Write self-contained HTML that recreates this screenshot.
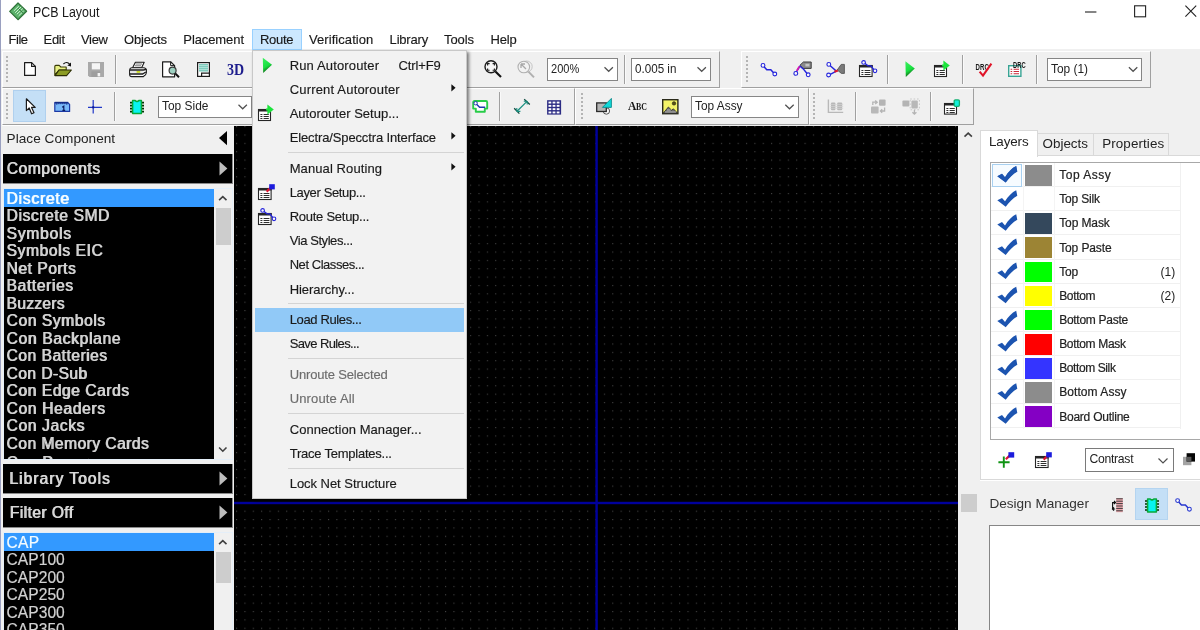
<!DOCTYPE html>
<html lang="en"><head><meta charset="utf-8"><title>PCB Layout</title>
<style>
html,body{margin:0;padding:0;background:#f0f0f0;}
body{width:1200px;height:630px;overflow:hidden;font-family:"Liberation Sans",sans-serif;}
#app{position:relative;width:1200px;height:630px;overflow:hidden;background:#f0f0f0;will-change:transform;}
#app div,#app span.t,#app svg{position:absolute;box-sizing:border-box;}
#app svg{overflow:visible;display:block;}
.t{white-space:pre;display:block;}
.combo{background:#fff;border:1px solid #868686;}
.sep{background:#a0a0a0;width:1px;}
.grip{background-image:radial-gradient(circle at 1px 1px,#b4b4b4 0.9px,transparent 1.2px);background-size:3px 4px;}

</style></head>
<body>
<div id="app">
<div style="left:0px;top:0px;width:1200px;height:49px;background:#fff;"></div>
<div style="left:0px;top:0px;width:1px;height:630px;background:#9aa0c0;"></div>
<svg style="left:9px;top:2px;" width="20" height="20" viewBox="0 0 20 20"><g transform="translate(0.2,0.3)"><path d="M0.5 9 L8.8 0.7 L17.4 9 L8.8 17.4 Z" fill="#58b068" stroke="#2e7238" stroke-width="1.2" stroke-linejoin="round"/><path d="M4.6 8.6 L9.6 3.8 M6 10.4 L12 4.6 M7.6 12 L13.6 6.2 M9.4 13.6 L14.4 8.8" stroke="#d4f4d8" stroke-width="1"/><path d="M9 6 L14 11" stroke="#2e7238" stroke-width="0.9"/></g></svg>
<span class="t" style="left:33px;top:4.2px;font-size:13.8px;line-height:18px;color:#1a1a1a;transform:scaleX(0.9016);transform-origin:0 0;">PCB Layout</span>
<svg style="left:1085px;top:11px;" width="12" height="2" viewBox="0 0 12 2"><path d="M0 1 H11.4" stroke="#222" stroke-width="1.1"/></svg>
<svg style="left:1134px;top:5px;" width="13" height="13" viewBox="0 0 13 13"><rect x="0.6" y="0.8" width="11" height="11" fill="none" stroke="#222" stroke-width="1.1"/></svg>
<svg style="left:1185px;top:5px;" width="12" height="12" viewBox="0 0 12 12"><path d="M0.4 0.6 L11.2 11.6 M11.2 0.6 L0.4 11.6" stroke="#222" stroke-width="1.1"/></svg>
<div style="left:252px;top:29px;width:50px;height:21px;background:#cce8ff;border:1px solid #99d1ff;"></div>
<span class="t" style="left:8.6px;top:30.5px;font-size:13px;line-height:18px;color:#1a1a1a;letter-spacing:-0.516px;-webkit-text-stroke:0.15px #1a1a1a;">File</span>
<span class="t" style="left:43.6px;top:30.5px;font-size:13px;line-height:18px;color:#1a1a1a;letter-spacing:-0.334px;-webkit-text-stroke:0.15px #1a1a1a;">Edit</span>
<span class="t" style="left:81px;top:30.5px;font-size:13px;line-height:18px;color:#1a1a1a;letter-spacing:-0.314px;-webkit-text-stroke:0.15px #1a1a1a;">View</span>
<span class="t" style="left:124px;top:30.5px;font-size:13px;line-height:18px;color:#1a1a1a;letter-spacing:-0.179px;-webkit-text-stroke:0.15px #1a1a1a;">Objects</span>
<span class="t" style="left:183.3px;top:30.5px;font-size:13px;line-height:18px;color:#1a1a1a;letter-spacing:-0.09px;-webkit-text-stroke:0.15px #1a1a1a;">Placement</span>
<span class="t" style="left:260px;top:30.5px;font-size:13px;line-height:18px;color:#1a1a1a;letter-spacing:-0.298px;-webkit-text-stroke:0.15px #1a1a1a;">Route</span>
<span class="t" style="left:309px;top:30.5px;font-size:13px;line-height:18px;color:#1a1a1a;letter-spacing:0.064px;-webkit-text-stroke:0.15px #1a1a1a;">Verification</span>
<span class="t" style="left:389.6px;top:30.5px;font-size:13px;line-height:18px;color:#1a1a1a;letter-spacing:-0.189px;-webkit-text-stroke:0.15px #1a1a1a;">Library</span>
<span class="t" style="left:444px;top:30.5px;font-size:13px;line-height:18px;color:#1a1a1a;letter-spacing:-0.087px;-webkit-text-stroke:0.15px #1a1a1a;">Tools</span>
<span class="t" style="left:490.6px;top:30.5px;font-size:13px;line-height:18px;color:#1a1a1a;letter-spacing:-0.179px;-webkit-text-stroke:0.15px #1a1a1a;">Help</span>
<div style="left:2px;top:51px;width:718px;height:37px;border-bottom:1px solid #a0a0a0;border-right:1px solid #a0a0a0;border-top:1px solid #fff;border-left:1px solid #fff;"></div>
<div class="grip" style="left:6px;top:56px;width:3px;height:28px;"></div>
<svg style="left:24px;top:62px;" width="12" height="14" viewBox="0 0 12 14"><path d="M0.6 0.6 H7.6 L11.4 4.4 V13.4 H0.6 Z" fill="#fff" stroke="#1c1c1c" stroke-width="1.2" stroke-linejoin="round"/><path d="M7.6 0.6 V4.4 H11.4" fill="none" stroke="#1c1c1c" stroke-width="1.1"/></svg>
<svg style="left:54px;top:61px;" width="18" height="16" viewBox="0 0 18 16"><g transform="translate(0,0.4)"><path d="M0.8 13.8 V5 Q0.8 4 1.8 4 H5.2 L6.8 5.6 H12.2 V8.6 H5 Z" fill="#e8f084" stroke="#3a3c08" stroke-width="1.1" stroke-linejoin="round"/><path d="M1 14.2 L5 8.6 H17.4 L12.6 14.2 Z" fill="#8c9c24" stroke="#2c2e04" stroke-width="1.1" stroke-linejoin="round"/><path d="M9.4 2.6 Q12.8 -0.6 15.8 3" fill="none" stroke="#111" stroke-width="1.1"/><path d="M17 1.2 V5 L13.4 4.2 Z" fill="#111"/></g></svg>
<svg style="left:88px;top:62px;" width="16" height="15" viewBox="0 0 16 15"><path d="M0 0 H16 V15 H1.5 L0 13.5 Z" fill="#a9a9a9"/><rect x="3.8" y="1.2" width="8.2" height="6.2" fill="#f6f6f6"/><rect x="3.4" y="9.4" width="9" height="5.6" fill="#9e9e9e"/><rect x="9.6" y="11" width="2.6" height="3.4" fill="#f4f4f4"/></svg>
<div style="left:115px;top:55px;width:1px;height:29px;background:#a0a0a0;box-shadow:1px 0 0 #fafafa;"></div>
<svg style="left:129px;top:61px;" width="18" height="17" viewBox="0 0 18 17"><g transform="translate(0,0.4)"><path d="M3.6 6.4 L6.4 0.8 H15.2 L12.6 6.4 Z" fill="#fff" stroke="#1c1c1c" stroke-width="1.1" stroke-linejoin="round"/><path d="M6.6 2.6 H13 M5.8 4.4 H12" stroke="#666" stroke-width="0.9"/><path d="M2.6 6.4 H14.4 Q17.4 6.6 17.4 9 V11.4 Q17.2 13.6 14.4 15.2 H2.8 Q0.6 15 0.6 13 V8.6 Q0.8 6.6 2.6 6.4 Z" fill="#fdfdfd" stroke="#1c1c1c" stroke-width="1.1"/><path d="M1 8.6 H14.4 Q16.6 8.4 17.2 7.6" fill="none" stroke="#1c1c1c" stroke-width="1.6"/><path d="M1 12.6 H13.6 L16.8 10.6" fill="none" stroke="#1c1c1c" stroke-width="1.3"/><rect x="1.4" y="9.6" width="12.4" height="1.8" fill="#e4e4e4"/><rect x="7.6" y="9.6" width="3.6" height="1.8" fill="#c8d820"/></g></svg>
<svg style="left:162px;top:61px;" width="18" height="17" viewBox="0 0 18 17"><path d="M0.6 0.8 H8.6 L12.6 4.6 V15.8 H0.6 Z" fill="#fff" stroke="#1c1c1c" stroke-width="1.2" stroke-linejoin="round"/><path d="M8.6 0.8 V4.6 H12.6" fill="none" stroke="#1c1c1c" stroke-width="1"/><circle cx="10.6" cy="9.6" r="3.5" fill="#9cd0c0" stroke="#3a3a3a" stroke-width="1.2"/><path d="M13.2 12.4 L17 16.2" stroke="#111" stroke-width="2"/></svg>
<svg style="left:197px;top:62px;" width="13" height="15" viewBox="0 0 13 15"><rect x="0.6" y="0.6" width="11.8" height="13.8" fill="#fff" stroke="#1c1c1c" stroke-width="1.2"/><rect x="2" y="2" width="9" height="7.8" fill="#c4ece4"/><path d="M2 2.8 H11 M2 4.8 H11 M2 6.8 H11 M2 8.8 H11" stroke="#68c0b0" stroke-width="1.1"/><path d="M4.6 14.4 V11.2 H12.4" fill="none" stroke="#1c1c1c" stroke-width="1.2"/></svg>
<span class="t" style="left:227.4px;top:60.7px;font-size:16.5px;line-height:18px;color:#1c1c8c;font-weight:700;font-family:&quot;Liberation Serif&quot;,serif;transform:scaleX(0.85);transform-origin:0 0;">3D</span>
<svg style="left:484px;top:60px;" width="18" height="18" viewBox="0 0 18 18"><circle cx="7" cy="6.8" r="6" fill="#f6f6f6" stroke="#1c1c1c" stroke-width="1.4"/><path d="M3.6 5.4 V3.6 H5.6 M8.6 3.6 H10.4 V5.4 M10.4 8.4 V10.2 H8.6 M5.6 10.2 H3.6 V8.4" fill="none" stroke="#1c1c1c" stroke-width="1.1"/><path d="M11.4 11.4 L17 17" stroke="#111" stroke-width="2.1"/></svg>
<svg style="left:517px;top:60px;" width="18" height="18" viewBox="0 0 18 18"><circle cx="9.6" cy="6.6" r="5.6" fill="none" stroke="#c4c4c4" stroke-width="1"/><circle cx="6.8" cy="7" r="5.8" fill="#f2f2f2" stroke="#b0b0b0" stroke-width="1.1"/><path d="M4 4 L9 9 M4 4 V8 M4 4 H8" stroke="#a8a8a8" stroke-width="1.3" fill="none"/><path d="M11.4 11.6 L17 17.4" stroke="#b0b0b0" stroke-width="2"/></svg>
<div class="combo" style="left:547px;top:57.6px;width:71px;height:23px;"></div><span class="t" style="left:551px;top:58.5px;font-size:13.5px;line-height:19px;color:#222;transform:scaleX(0.8167);transform-origin:0 0;">200%</span><svg style="left:604px;top:66px;" width="10" height="7" viewBox="0 0 10 7"><g transform="translate(0,0.7)"><path d="M0.5 0.5 L4.7 4.6 L8.9 0.5" fill="none" stroke="#505050" stroke-width="1.2"/></g></svg>
<div style="left:624px;top:55px;width:1px;height:29px;background:#a0a0a0;box-shadow:1px 0 0 #fafafa;"></div>
<div class="combo" style="left:631px;top:57.6px;width:80px;height:23px;"></div><span class="t" style="left:635px;top:58.5px;font-size:13.5px;line-height:19px;color:#222;transform:scaleX(0.8618);transform-origin:0 0;">0.005 in</span><svg style="left:697px;top:66px;" width="10" height="7" viewBox="0 0 10 7"><g transform="translate(0,0.7)"><path d="M0.5 0.5 L4.7 4.6 L8.9 0.5" fill="none" stroke="#505050" stroke-width="1.2"/></g></svg>
<div style="left:741px;top:51px;width:410px;height:37px;border-bottom:1px solid #a0a0a0;border-right:1px solid #a0a0a0;border-top:1px solid #fff;border-left:1px solid #fff;"></div>
<div class="grip" style="left:746px;top:56px;width:3px;height:28px;"></div>
<svg style="left:760px;top:62px;" width="18" height="15" viewBox="0 0 18 15"><g transform="translate(0.4,0.8)"><path d="M3.4 3.6 L6.4 7 H10.4 L13.6 10.4" fill="none" stroke="#2424dc" stroke-width="1.5"/><circle cx="2.6" cy="2.6" r="1.9" fill="#fbfbfb" stroke="#2424dc" stroke-width="1.1"/><circle cx="14.4" cy="11.2" r="1.9" fill="#fbfbfb" stroke="#2424dc" stroke-width="1.1"/></g></svg>
<svg style="left:793px;top:61px;" width="19" height="17" viewBox="0 0 19 17"><g transform="translate(0,0.2)"><path d="M7 4 L10.4 0.8 H18.2 V7.2 H10 L7 4 Z" fill="#8a8a8a" stroke="#3c3c3c" stroke-width="1"/><rect x="12.4" y="2.6" width="4" height="2.6" fill="#c4c4c4"/><path d="M3.2 11 L7 5 L10.6 8 L14.6 13" fill="none" stroke="#2424dc" stroke-width="1.4"/><path d="M3.8 9.6 L6.4 5.2" stroke="#d818b0" stroke-width="1.8"/><circle cx="2.8" cy="12.2" r="1.9" fill="#fbfbfb" stroke="#2424dc" stroke-width="1.1"/><circle cx="15.2" cy="13.6" r="1.9" fill="#fbfbfb" stroke="#2424dc" stroke-width="1.1"/></g></svg>
<svg style="left:825px;top:62px;" width="20" height="15" viewBox="0 0 20 15"><g transform="translate(0.8,0)"><path d="M11.4 8 L15.4 2.4 H18.6 V11.4 H15.6 Z" fill="#7a7a7a" stroke="#4a4a4a" stroke-width="0.8"/><path d="M3.6 3 L10.6 9.2 L4 12.6" fill="none" stroke="#2424dc" stroke-width="1.4"/><path d="M8.6 9.8 L12 8.4" stroke="#e01428" stroke-width="2.2"/><circle cx="3" cy="2.4" r="1.9" fill="#fbfbfb" stroke="#2424dc" stroke-width="1.1"/><circle cx="2.8" cy="13" r="1.9" fill="#fbfbfb" stroke="#2424dc" stroke-width="1.1"/></g></svg>
<svg style="left:859px;top:60px;" width="19" height="18" viewBox="0 0 19 18"><g transform="translate(0,0.4)"><g transform="translate(0,4.6)"><rect x="0.5" y="0.5" width="12.6" height="11" fill="#fff" stroke="#262626" stroke-width="1.1"/><rect x="0" y="0" width="13.6" height="2.5" fill="#262626"/><path d="M2.4 5.5 H4.4 M5.6 5.5 H11.4" stroke="#2e2e2e" stroke-width="1"/><path d="M2.4 7.5 H4.4 M5.6 7.5 H11.4" stroke="#2e2e2e" stroke-width="1"/><path d="M2.4 9.5 H4.4 M5.6 9.5 H11.4" stroke="#2e2e2e" stroke-width="1"/></g><path d="M5.4 2.6 L9 5.4 H12 L15 9.6" fill="none" stroke="#2424dc" stroke-width="1.3"/><circle cx="4.6" cy="2" r="1.8" fill="#fbfbfb" stroke="#2424dc" stroke-width="1.1"/><circle cx="16" cy="10.4" r="1.8" fill="#fbfbfb" stroke="#2424dc" stroke-width="1.1"/></g></svg>
<div style="left:887px;top:55px;width:1px;height:29px;background:#a0a0a0;box-shadow:1px 0 0 #fafafa;"></div>
<svg style="left:905px;top:61px;" width="10" height="16" viewBox="0 0 10 16"><g transform="translate(0.2,0)"><defs><linearGradient id="pg1" x1="0" y1="0" x2="0.35" y2="1"><stop offset="0" stop-color="#3cf060"/><stop offset="0.62" stop-color="#18e040"/><stop offset="0.8" stop-color="#149c28"/><stop offset="1" stop-color="#0c5c14"/></linearGradient></defs><path d="M0.2 0.2 L9.6 7.4 L0.6 16 Z" fill="url(#pg1)"/></g></svg>
<svg style="left:934px;top:60px;" width="16" height="18" viewBox="0 0 16 18"><g transform="translate(0,0.4)"><g transform="translate(0,4.6)"><rect x="0.5" y="0.5" width="12" height="11" fill="#fff" stroke="#262626" stroke-width="1.1"/><rect x="0" y="0" width="13" height="2.5" fill="#262626"/><path d="M2.4 5.5 H4.4 M5.6 5.5 H10.8" stroke="#2e2e2e" stroke-width="1"/><path d="M2.4 7.5 H4.4 M5.6 7.5 H10.8" stroke="#2e2e2e" stroke-width="1"/><path d="M2.4 9.5 H4.4 M5.6 9.5 H10.8" stroke="#2e2e2e" stroke-width="1"/></g><path d="M9.4 0 L15.8 5 L9.4 10 Z" fill="#1ce43c"/><path d="M8 5 H10" stroke="#1ce43c" stroke-width="2"/></g></svg>
<div style="left:962px;top:55px;width:1px;height:29px;background:#a0a0a0;box-shadow:1px 0 0 #fafafa;"></div>
<svg style="left:975px;top:63px;" width="18" height="14" viewBox="0 0 18 14"><g transform="translate(0.4,0)"><text x="0.2" y="6.8" font-family="Liberation Sans,sans-serif" font-size="8.4" font-weight="700" fill="#181818" textLength="13.2" lengthAdjust="spacingAndGlyphs">DRC</text><path d="M4.2 8.6 L7.6 12.6 L16 0.6" fill="none" stroke="#e01428" stroke-width="2.1"/></g></svg>
<svg style="left:1008px;top:62px;" width="18" height="16" viewBox="0 0 18 16"><g transform="translate(0,0.2)"><rect x="0.7" y="3.5" width="12.2" height="10.6" fill="#fff" stroke="#38a494" stroke-width="1.4"/><path d="M2.6 7 H4.2 M5.6 7 H11 M2.6 9.3 H4.2 M5.6 9.3 H11 M2.6 11.6 H4.2 M5.6 11.6 H11" stroke="#cc2838" stroke-width="1.1"/><text x="5" y="6" font-family="Liberation Sans,sans-serif" font-size="8.4" font-weight="700" fill="#181818" textLength="12.6" lengthAdjust="spacingAndGlyphs">DRC</text></g></svg>
<div style="left:1036px;top:55px;width:1px;height:29px;background:#a0a0a0;box-shadow:1px 0 0 #fafafa;"></div>
<div class="combo" style="left:1047px;top:57.6px;width:95.4px;height:23px;"></div><span class="t" style="left:1051px;top:58.5px;font-size:13.5px;line-height:19px;color:#222;transform:scaleX(0.8806);transform-origin:0 0;">Top (1)</span><svg style="left:1128px;top:66px;" width="10" height="7" viewBox="0 0 10 7"><g transform="translate(0.4,0.7)"><path d="M0.5 0.5 L4.7 4.6 L8.9 0.5" fill="none" stroke="#505050" stroke-width="1.2"/></g></svg>
<div style="left:2px;top:88px;width:573px;height:37px;border-bottom:1px solid #a0a0a0;border-right:1px solid #a0a0a0;border-top:1px solid #fff;border-left:1px solid #fff;"></div>
<div class="grip" style="left:6px;top:93px;width:3px;height:28px;"></div>
<div style="left:13px;top:90px;width:33px;height:32px;background:#c4dff6;border:1px solid #b0d0ee;"></div>
<svg style="left:25px;top:98px;" width="12" height="17" viewBox="0 0 12 17"><g transform="translate(0.6,0)"><path d="M0.8 0.8 V12.6 L3.6 10 L6 15.8 L8.4 14.8 L6 9.4 H9.6 Z" fill="#fff" stroke="#1c1c1c" stroke-width="1.2" stroke-linejoin="round"/></g></svg>
<svg style="left:54px;top:101px;" width="17" height="11" viewBox="0 0 17 11"><g transform="translate(0.2,0)"><path d="M0.6 1.6 H13.6 L15.4 3.4 V10.4 H0.6 Z" fill="#78b8f8" stroke="#1c38a4" stroke-width="1.2" stroke-linejoin="round"/><path d="M0.6 1.6 H14" stroke="#142c88" stroke-width="1.6"/><path d="M2.6 1 V3.8 M4.6 1 V3.2 M6.6 1 V3.2 M8.6 1 V3.2 M10.6 1 V3.2 M12.6 1 V3.8" stroke="#142c88" stroke-width="0.9"/><path d="M8 6.2 L9.6 5.2 V9.4 M8.2 9.4 H11" stroke="#0c1c60" stroke-width="1.2" fill="none"/></g></svg>
<svg style="left:88px;top:100px;" width="14" height="14" viewBox="0 0 14 14"><path d="M5.2 0 V13.6 M0 7.3 H14" stroke="#2038c8" stroke-width="1.2"/><rect x="4.2" y="6.3" width="2" height="2" fill="#101c90"/></svg>
<div style="left:114px;top:92px;width:1px;height:29px;background:#a0a0a0;box-shadow:1px 0 0 #fafafa;"></div>
<svg style="left:130px;top:99px;" width="14" height="16" viewBox="0 0 14 16"><g transform="translate(0,0.6)"><path d="M0 3 H3 M0 6 H3 M0 9 H3 M0 12 H3 M11 3 H14 M11 6 H14 M11 9 H14 M11 12 H14" stroke="#003000" stroke-width="1.7"/><path d="M2.6 1 H5.2 Q7 2.8 8.8 1 H11.4 V14 H2.6 Z" fill="#08f4f0" stroke="#08a838" stroke-width="1.5" stroke-linejoin="round"/></g></svg>
<div class="combo" style="left:158px;top:95.6px;width:94px;height:22px;"></div><span class="t" style="left:162px;top:97.19999999999999px;font-size:13.5px;line-height:18px;color:#222;transform:scaleX(0.8832);transform-origin:0 0;">Top Side</span><svg style="left:238px;top:104px;" width="10" height="6" viewBox="0 0 10 6"><g transform="translate(0,0.2)"><path d="M0.5 0.5 L4.7 4.6 L8.9 0.5" fill="none" stroke="#505050" stroke-width="1.2"/></g></svg>
<svg style="left:472px;top:100px;" width="17" height="13" viewBox="0 0 17 13"><g transform="translate(0.2,0)"><path d="M2.4 1 H13.8 Q15 1 15 2.4 V8.6 H12.6 V11.8 H3.6 V8.6 H1 V2.4 Q1 1 2.4 1 Z" fill="#fff" stroke="#28cc48" stroke-width="1.9" stroke-linejoin="round"/><path d="M3.6 3.4 L7.4 7.2 H13" fill="none" stroke="#2038b0" stroke-width="1.4"/><circle cx="3.4" cy="3.2" r="1.7" fill="#fff" stroke="#2038b0" stroke-width="1"/></g></svg>
<div style="left:499px;top:92px;width:1px;height:29px;background:#a0a0a0;box-shadow:1px 0 0 #fafafa;"></div>
<svg style="left:513px;top:98px;" width="18" height="17" viewBox="0 0 18 17"><g transform="translate(0.6,0.6)"><path d="M3.4 12.6 L13.4 2.8" stroke="#189080" stroke-width="1.2"/><path d="M0.6 9.6 L5.8 15 M10.6 0.6 L16.2 5.8" stroke="#104c40" stroke-width="1.3"/><path d="M3.2 12.8 V9.4 M3.2 12.8 H6.8 M13.6 2.6 V6 M13.6 2.6 H10.2" stroke="#189080" stroke-width="1.1"/></g></svg>
<svg style="left:547px;top:100px;" width="15" height="16" viewBox="0 0 15 16"><g transform="translate(0.1,0.2)"><rect x="0" y="0" width="14" height="14.4" fill="#2c2c84"/><rect x="1.4" y="1.4" width="2.8" height="1.9" fill="#fff"/><rect x="5.5" y="1.4" width="2.8" height="1.9" fill="#fff"/><rect x="9.6" y="1.4" width="2.8" height="1.9" fill="#fff"/><rect x="1.4" y="4.7" width="2.8" height="1.9" fill="#fff"/><rect x="5.5" y="4.7" width="2.8" height="1.9" fill="#fff"/><rect x="9.6" y="4.7" width="2.8" height="1.9" fill="#fff"/><rect x="1.4" y="8.0" width="2.8" height="1.9" fill="#fff"/><rect x="5.5" y="8.0" width="2.8" height="1.9" fill="#fff"/><rect x="9.6" y="8.0" width="2.8" height="1.9" fill="#fff"/><rect x="1.4" y="11.3" width="2.8" height="1.9" fill="#fff"/><rect x="5.5" y="11.3" width="2.8" height="1.9" fill="#fff"/><rect x="9.6" y="11.3" width="2.8" height="1.9" fill="#fff"/></g></svg>
<div style="left:575px;top:88px;width:234px;height:37px;border-bottom:1px solid #a0a0a0;border-right:1px solid #a0a0a0;border-top:1px solid #fff;border-left:1px solid #fff;"></div>
<div class="grip" style="left:581px;top:93px;width:3px;height:28px;"></div>
<svg style="left:596px;top:98px;" width="16" height="17" viewBox="0 0 16 17"><circle cx="10.4" cy="13" r="3.2" fill="#f8f8f8" stroke="#555" stroke-width="1"/><rect x="0.7" y="4.9" width="9.6" height="8.6" fill="#b4b4b4" stroke="#2a2a2a" stroke-width="1.3"/><path d="M6.4 9.4 L15.4 0.4 V9.4 Z" fill="#10d8d8" stroke="#0c8c8c" stroke-width="0.9"/></svg>
<span class="t" style="left:628px;top:99px;font-size:13.4px;line-height:14px;color:#181818;font-weight:700;font-family:&quot;Liberation Serif&quot;,serif;transform:scaleX(0.86);transform-origin:0 0;">A</span>
<span class="t" style="left:636px;top:101.8px;font-size:9.4px;line-height:11px;color:#181818;font-weight:700;font-family:&quot;Liberation Serif&quot;,serif;transform:scaleX(0.84);transform-origin:0 0;">BC</span>
<svg style="left:662px;top:99px;" width="17" height="16" viewBox="0 0 17 16"><rect x="0.7" y="0.7" width="15.2" height="14" fill="#f4f468" stroke="#2a2a1a" stroke-width="1.4"/><circle cx="12" cy="4.4" r="1.7" fill="#5c5410" stroke="#2a2a1a" stroke-width="0.7"/><path d="M1.2 14.2 L6.4 8 L9.6 11.2 L11.4 9.8 L15.6 14.2 Z" fill="#6c6c6c" stroke="#2a2a2a" stroke-width="0.8"/><path d="M3 13 H14 M5 11 H8.6" stroke="#d8d8d8" stroke-width="0.7"/></svg>
<div class="combo" style="left:691px;top:95.6px;width:107.8px;height:22px;"></div><span class="t" style="left:695px;top:97.19999999999999px;font-size:13.5px;line-height:18px;color:#222;transform:scaleX(0.8792);transform-origin:0 0;">Top Assy</span><svg style="left:784px;top:104px;" width="11" height="6" viewBox="0 0 11 6"><g transform="translate(0.8,0.2)"><path d="M0.5 0.5 L4.7 4.6 L8.9 0.5" fill="none" stroke="#505050" stroke-width="1.2"/></g></svg>
<div style="left:809px;top:88px;width:165px;height:37px;border-bottom:1px solid #a0a0a0;border-right:1px solid #a0a0a0;border-top:1px solid #fff;border-left:1px solid #fff;"></div>
<div class="grip" style="left:813px;top:93px;width:3px;height:28px;"></div>
<svg style="left:827px;top:99px;" width="17" height="15" viewBox="0 0 17 15"><g transform="translate(0.6,0.6)"><path d="M0.8 0 V12.8 H15.6" fill="none" stroke="#b8b8b8" stroke-width="1.4"/><rect x="3.4" y="3" width="4.4" height="7.6" rx="1" fill="#b8b8b8"/><rect x="9.6" y="3" width="5" height="7.6" rx="1" fill="#b8b8b8"/><path d="M2.6 5 H15.6 M2.6 6.9 H15.6 M2.6 8.8 H15.6" stroke="#d4d4d4" stroke-width="0.7"/></g></svg>
<div style="left:855px;top:92px;width:1px;height:29px;background:#a0a0a0;box-shadow:1px 0 0 #fafafa;"></div>
<svg style="left:870px;top:99px;" width="17" height="15" viewBox="0 0 17 15"><g transform="translate(0.4,0)"><rect x="8.6" y="0.4" width="6.6" height="6.4" rx="1" fill="#b4b4b4"/><rect x="0.6" y="7.6" width="7.6" height="7" rx="1" fill="#b8b8b8"/><path d="M2.4 6 V3.2 H6.4 M4.8 1.4 L6.8 3.2 L4.8 5" fill="none" stroke="#b4b4b4" stroke-width="1.3"/><path d="M14.2 8.4 V12 H10 M11.8 10.2 L10 12 L11.8 13.8" fill="none" stroke="#b4b4b4" stroke-width="1.3"/></g></svg>
<svg style="left:902px;top:98px;" width="18" height="18" viewBox="0 0 18 18"><g transform="translate(0,0.2)"><rect x="0.4" y="2.4" width="7" height="6" rx="1" fill="#b4b4b4"/><rect x="9.4" y="2.4" width="6.4" height="8" rx="1" fill="#b8b8b8"/><path d="M8.2 0.8 H17.4 V11.6 H8.2 Z" fill="none" stroke="#c8c8c8" stroke-width="1" stroke-dasharray="1.6 1.8"/><path d="M12.4 11.6 V16 M10.4 14 L12.4 16 L14.4 14" fill="none" stroke="#b4b4b4" stroke-width="1.3"/></g></svg>
<div style="left:930px;top:92px;width:1px;height:29px;background:#a0a0a0;box-shadow:1px 0 0 #fafafa;"></div>
<svg style="left:944px;top:99px;" width="16" height="17" viewBox="0 0 16 17"><g transform="translate(0,0.2)"><g transform="translate(0,3.8)"><rect x="0.5" y="0.5" width="12" height="10.6" fill="#fff" stroke="#262626" stroke-width="1.1"/><rect x="0" y="0" width="13" height="2.5" fill="#262626"/><path d="M2.4 5.5 H4.4 M5.6 5.5 H10.8" stroke="#2e2e2e" stroke-width="1"/><path d="M2.4 7.5 H4.4 M5.6 7.5 H10.8" stroke="#2e2e2e" stroke-width="1"/><path d="M2.4 9.5 H4.4 M5.6 9.5 H10.8" stroke="#2e2e2e" stroke-width="1"/></g><rect x="10.2" y="0.7" width="5.2" height="6.4" rx="1.2" fill="#10f0dc" stroke="#10b070" stroke-width="1.3"/></g></svg>
<div style="left:2px;top:125px;width:232px;height:505px;background:#f0f0f0;"></div>
<div style="left:2px;top:125px;width:232px;height:29px;background:#f0f0f0;border-top:1px solid #fff;"></div>
<span class="t" style="left:6.6px;top:129.6px;font-size:13.6px;line-height:18px;color:#222;letter-spacing:0.035px;">Place Component</span>
<svg style="left:218px;top:130px;" width="10" height="16" viewBox="0 0 10 16"><g transform="translate(0.6,0.8)"><path d="M8.4 0.2 V14.4 L0.4 7.3 Z" fill="#000"/></g></svg>
<div style="left:3px;top:154px;width:230px;height:30px;background:#000;border-right:1px solid #8a8a8a;border-bottom:1px solid #8a8a8a;"></div><span class="t" style="left:6.4px;top:159px;font-size:15.6px;line-height:19px;color:#d8d8d8;letter-spacing:0.55px;text-shadow:0.8px 0 0 #d8d8d8;-webkit-text-stroke:0.12px #d8d8d8;">Components</span><svg style="left:219px;top:161px;" width="9" height="15" viewBox="0 0 9 15"><path d="M0.5 0.4 V14.6 L8.4 7.5 Z" fill="#bdbdbd"/></svg>
<div style="left:3px;top:464px;width:230px;height:30px;background:#000;border-right:1px solid #8a8a8a;border-bottom:1px solid #8a8a8a;"></div><span class="t" style="left:9.1px;top:469px;font-size:15.6px;line-height:19px;color:#d8d8d8;letter-spacing:1.029px;text-shadow:0.8px 0 0 #d8d8d8;-webkit-text-stroke:0.12px #d8d8d8;">Library Tools</span><svg style="left:219px;top:471px;" width="9" height="15" viewBox="0 0 9 15"><path d="M0.5 0.4 V14.6 L8.4 7.5 Z" fill="#bdbdbd"/></svg>
<div style="left:3px;top:498px;width:230px;height:30px;background:#000;border-right:1px solid #8a8a8a;border-bottom:1px solid #8a8a8a;"></div><span class="t" style="left:9.5px;top:503px;font-size:15.6px;line-height:19px;color:#d8d8d8;letter-spacing:0.431px;text-shadow:0.8px 0 0 #d8d8d8;-webkit-text-stroke:0.12px #d8d8d8;">Filter Off</span><svg style="left:219px;top:505px;" width="9" height="15" viewBox="0 0 9 15"><path d="M0.5 0.4 V14.6 L8.4 7.5 Z" fill="#bdbdbd"/></svg>
<div style="left:3px;top:187.5px;width:230px;height:272.5px;background:#000;border:1px solid #e4eef8;"></div>
<div style="left:4px;top:188.7px;width:210px;height:18px;background:#3399ff;"></div>
<div style="left:3px;top:189px;width:211px;height:270px;overflow:hidden;"><span class="t" style="left:3.3px;top:0.6px;font-size:15.6px;line-height:18px;color:#f4fcff;letter-spacing:0.755px;text-shadow:0.8px 0 0 #f4fcff;-webkit-text-stroke:0.12px #f4fcff;">Discrete</span><span class="t" style="left:3.3px;top:18.13px;font-size:15.6px;line-height:18px;color:#d2d2d2;letter-spacing:0.599px;text-shadow:0.8px 0 0 #d2d2d2;-webkit-text-stroke:0.12px #d2d2d2;">Discrete SMD</span><span class="t" style="left:3.3px;top:35.66px;font-size:15.6px;line-height:18px;color:#d2d2d2;letter-spacing:0.78px;text-shadow:0.8px 0 0 #d2d2d2;-webkit-text-stroke:0.12px #d2d2d2;">Symbols</span><span class="t" style="left:3.3px;top:53.19px;font-size:15.6px;line-height:18px;color:#d2d2d2;letter-spacing:0.604px;text-shadow:0.8px 0 0 #d2d2d2;-webkit-text-stroke:0.12px #d2d2d2;">Symbols EIC</span><span class="t" style="left:3.3px;top:70.72px;font-size:15.6px;line-height:18px;color:#d2d2d2;letter-spacing:0.522px;text-shadow:0.8px 0 0 #d2d2d2;-webkit-text-stroke:0.12px #d2d2d2;">Net Ports</span><span class="t" style="left:3.3px;top:88.25px;font-size:15.6px;line-height:18px;color:#d2d2d2;letter-spacing:0.617px;text-shadow:0.8px 0 0 #d2d2d2;-webkit-text-stroke:0.12px #d2d2d2;">Batteries</span><span class="t" style="left:3.3px;top:105.78px;font-size:15.6px;line-height:18px;color:#d2d2d2;letter-spacing:0.258px;text-shadow:0.8px 0 0 #d2d2d2;-webkit-text-stroke:0.12px #d2d2d2;">Buzzers</span><span class="t" style="left:3.3px;top:123.31px;font-size:15.6px;line-height:18px;color:#d2d2d2;letter-spacing:0.573px;text-shadow:0.8px 0 0 #d2d2d2;-webkit-text-stroke:0.12px #d2d2d2;">Con Symbols</span><span class="t" style="left:3.3px;top:140.84px;font-size:15.6px;line-height:18px;color:#d2d2d2;letter-spacing:0.675px;text-shadow:0.8px 0 0 #d2d2d2;-webkit-text-stroke:0.12px #d2d2d2;">Con Backplane</span><span class="t" style="left:3.3px;top:158.37px;font-size:15.6px;line-height:18px;color:#d2d2d2;letter-spacing:0.499px;text-shadow:0.8px 0 0 #d2d2d2;-webkit-text-stroke:0.12px #d2d2d2;">Con Batteries</span><span class="t" style="left:3.3px;top:175.9px;font-size:15.6px;line-height:18px;color:#d2d2d2;letter-spacing:0.416px;text-shadow:0.8px 0 0 #d2d2d2;-webkit-text-stroke:0.12px #d2d2d2;">Con D-Sub</span><span class="t" style="left:3.3px;top:193.43px;font-size:15.6px;line-height:18px;color:#d2d2d2;letter-spacing:0.551px;text-shadow:0.8px 0 0 #d2d2d2;-webkit-text-stroke:0.12px #d2d2d2;">Con Edge Cards</span><span class="t" style="left:3.3px;top:210.96px;font-size:15.6px;line-height:18px;color:#d2d2d2;letter-spacing:0.658px;text-shadow:0.8px 0 0 #d2d2d2;-webkit-text-stroke:0.12px #d2d2d2;">Con Headers</span><span class="t" style="left:3.3px;top:228.49px;font-size:15.6px;line-height:18px;color:#d2d2d2;letter-spacing:0.634px;text-shadow:0.8px 0 0 #d2d2d2;-webkit-text-stroke:0.12px #d2d2d2;">Con Jacks</span><span class="t" style="left:3.3px;top:246.02px;font-size:15.6px;line-height:18px;color:#d2d2d2;letter-spacing:0.464px;text-shadow:0.8px 0 0 #d2d2d2;-webkit-text-stroke:0.12px #d2d2d2;">Con Memory Cards</span><span class="t" style="left:3.3px;top:264.75px;font-size:15.6px;line-height:18px;color:#d2d2d2;letter-spacing:0.716px;text-shadow:0.8px 0 0 #d2d2d2;-webkit-text-stroke:0.12px #d2d2d2;">Con Power</span></div>
<div style="left:214px;top:188.5px;width:18px;height:270.5px;background:#f0f0f0;"></div>
<svg style="left:218px;top:196px;" width="9" height="6" viewBox="0 0 9 6"><g transform="translate(0.6,0)"><path d="M0.5 4.2 L4.2 0.7 L7.9 4.2" fill="none" stroke="#404040" stroke-width="1.6"/></g></svg>
<div style="left:215.8px;top:208px;width:14.8px;height:37px;background:#cdcdcd;"></div>
<svg style="left:218px;top:447px;" width="9" height="6" viewBox="0 0 9 6"><g transform="translate(0.6,0)"><path d="M0.5 0.5 L4.2 4.2 L7.9 0.5" fill="none" stroke="#404040" stroke-width="1.6"/></g></svg>
<div style="left:3px;top:531.5px;width:230px;height:100px;background:#000;border:1px solid #e4eef8;"></div>
<div style="left:4px;top:532.7px;width:210px;height:18px;background:#3399ff;"></div>
<div style="left:3px;top:533px;width:211px;height:97px;overflow:hidden;"><span class="t" style="left:3.5px;top:0.6px;font-size:15.6px;line-height:18px;color:#f4fcff;letter-spacing:0.312px;-webkit-text-stroke:0.2px #f4fcff;">CAP</span><span class="t" style="left:3.5px;top:18.13px;font-size:15.6px;line-height:18px;color:#d2d2d2;letter-spacing:0.039px;-webkit-text-stroke:0.2px #d2d2d2;">CAP100</span><span class="t" style="left:3.5px;top:35.66px;font-size:15.6px;line-height:18px;color:#d2d2d2;letter-spacing:0.039px;-webkit-text-stroke:0.2px #d2d2d2;">CAP200</span><span class="t" style="left:3.5px;top:53.19px;font-size:15.6px;line-height:18px;color:#d2d2d2;letter-spacing:0.039px;-webkit-text-stroke:0.2px #d2d2d2;">CAP250</span><span class="t" style="left:3.5px;top:70.72px;font-size:15.6px;line-height:18px;color:#d2d2d2;letter-spacing:0.039px;-webkit-text-stroke:0.2px #d2d2d2;">CAP300</span><span class="t" style="left:3.5px;top:88.25px;font-size:15.6px;line-height:18px;color:#d2d2d2;letter-spacing:0.039px;-webkit-text-stroke:0.2px #d2d2d2;">CAP350</span></div>
<div style="left:214px;top:532.5px;width:18px;height:98px;background:#f0f0f0;"></div>
<svg style="left:218px;top:540px;" width="9" height="6" viewBox="0 0 9 6"><g transform="translate(0.6,0)"><path d="M0.5 4.2 L4.2 0.7 L7.9 4.2" fill="none" stroke="#404040" stroke-width="1.6"/></g></svg>
<div style="left:215.8px;top:552px;width:14.8px;height:30.5px;background:#cdcdcd;"></div>
<div style="left:234.4px;top:126px;width:723.9px;height:504px;background:#000;overflow:hidden;"><svg style="left:0;top:0" width="725" height="505" viewBox="0 0 725 505"><defs><pattern id="dots" x="361.50" y="376.30" width="8.36" height="8.36" patternUnits="userSpaceOnUse"><rect x="0" y="0" width="1.1" height="1.1" fill="#444"/></pattern></defs><rect width="725" height="505" fill="url(#dots)"/><rect x="361.40" y="0" width="2.4" height="505" fill="#00009c"/><rect x="0" y="375.80" width="725" height="2.4" fill="#00009c"/></svg></div>
<div style="left:959px;top:126px;width:19px;height:504px;background:#f0f0f0;"></div>
<svg style="left:964px;top:132px;" width="9" height="6" viewBox="0 0 9 6"><g transform="translate(0,0.4)"><path d="M0.5 4.2 L4.2 0.7 L7.9 4.2" fill="none" stroke="#404040" stroke-width="1.6"/></g></svg>
<div style="left:960.8px;top:493.7px;width:16.2px;height:18.5px;background:#cdcdcd;"></div>
<div style="left:978px;top:125px;width:222px;height:505px;background:#f0f0f0;"></div>
<div style="left:980px;top:155px;width:220px;height:325px;background:#fff;border-top:1px solid #d9d9d9;border-left:1px solid #d9d9d9;border-bottom:1px solid #d9d9d9;"></div>
<div style="left:1037px;top:132.5px;width:57px;height:23.5px;background:#f0f0f0;border:1px solid #d9d9d9;"></div>
<div style="left:1093px;top:132.5px;width:76px;height:23.5px;background:#f0f0f0;border:1px solid #d9d9d9;"></div>
<div style="left:980px;top:130px;width:58px;height:27px;background:#fff;border:1px solid #d9d9d9;border-bottom:none;"></div>
<span class="t" style="left:989px;top:133px;font-size:13.4px;line-height:18px;color:#222;letter-spacing:-0.124px;">Layers</span>
<span class="t" style="left:1042.6px;top:135px;font-size:13.4px;line-height:18px;color:#222;letter-spacing:-0.005px;">Objects</span>
<span class="t" style="left:1102.2px;top:135px;font-size:13.4px;line-height:18px;color:#222;letter-spacing:0.103px;">Properties</span>
<div style="left:990px;top:162px;width:212px;height:278px;background:#fff;border:1px solid #a8a8a8;"></div>
<div style="left:991px;top:186.13px;width:190px;height:1px;background:#f0f0f0;"></div>
<div style="left:1025px;top:165.0px;width:27.4px;height:20.6px;background:#8c8c8c;"></div>
<svg style="left:997px;top:165px;" width="21" height="18" viewBox="0 0 21 18"><path d="M0.3 11.2 L5 8.8 L8 12.2 C11 7 15 3 19.2 1 L20.3 6.6 C16 9 12 13 8.7 17.5 Z" fill="#1c54b0"/></svg>
<span class="t" style="left:1059.2px;top:167.2px;font-size:12px;line-height:17px;color:#222;letter-spacing:0.511px;-webkit-text-stroke:0.2px #222;">Top Assy</span>
<div style="left:991px;top:210.26px;width:190px;height:1px;background:#f0f0f0;"></div>
<div style="left:1025px;top:189.13px;width:27.4px;height:20.6px;background:#ffffff;"></div>
<svg style="left:997px;top:189px;" width="21" height="19" viewBox="0 0 21 19"><g transform="translate(0,0.13)"><path d="M0.3 11.2 L5 8.8 L8 12.2 C11 7 15 3 19.2 1 L20.3 6.6 C16 9 12 13 8.7 17.5 Z" fill="#1c54b0"/></g></svg>
<span class="t" style="left:1059.2px;top:191.33px;font-size:12px;line-height:17px;color:#222;letter-spacing:-0.174px;-webkit-text-stroke:0.2px #222;">Top Silk</span>
<div style="left:991px;top:234.39px;width:190px;height:1px;background:#f0f0f0;"></div>
<div style="left:1025px;top:213.26px;width:27.4px;height:20.6px;background:#34485c;"></div>
<svg style="left:997px;top:213px;" width="21" height="19" viewBox="0 0 21 19"><g transform="translate(0,0.26)"><path d="M0.3 11.2 L5 8.8 L8 12.2 C11 7 15 3 19.2 1 L20.3 6.6 C16 9 12 13 8.7 17.5 Z" fill="#1c54b0"/></g></svg>
<span class="t" style="left:1059.2px;top:215.46px;font-size:12px;line-height:17px;color:#222;letter-spacing:-0.107px;-webkit-text-stroke:0.2px #222;">Top Mask</span>
<div style="left:991px;top:258.52px;width:190px;height:1px;background:#f0f0f0;"></div>
<div style="left:1025px;top:237.39px;width:27.4px;height:20.6px;background:#9c8434;"></div>
<svg style="left:997px;top:237px;" width="21" height="19" viewBox="0 0 21 19"><g transform="translate(0,0.39)"><path d="M0.3 11.2 L5 8.8 L8 12.2 C11 7 15 3 19.2 1 L20.3 6.6 C16 9 12 13 8.7 17.5 Z" fill="#1c54b0"/></g></svg>
<span class="t" style="left:1059.2px;top:239.59px;font-size:12px;line-height:17px;color:#222;letter-spacing:-0.121px;-webkit-text-stroke:0.2px #222;">Top Paste</span>
<div style="left:991px;top:282.65px;width:190px;height:1px;background:#f0f0f0;"></div>
<div style="left:1025px;top:261.52px;width:27.4px;height:20.6px;background:#00ff00;"></div>
<svg style="left:997px;top:261px;" width="21" height="19" viewBox="0 0 21 19"><g transform="translate(0,0.52)"><path d="M0.3 11.2 L5 8.8 L8 12.2 C11 7 15 3 19.2 1 L20.3 6.6 C16 9 12 13 8.7 17.5 Z" fill="#1c54b0"/></g></svg>
<span class="t" style="left:1059.2px;top:263.72px;font-size:12px;line-height:17px;color:#222;letter-spacing:-0.174px;-webkit-text-stroke:0.2px #222;">Top</span>
<span class="t" style="left:1160.6px;top:263.72px;font-size:12px;line-height:17px;color:#222;letter-spacing:-0.033px;">(1)</span>
<div style="left:991px;top:306.78px;width:190px;height:1px;background:#f0f0f0;"></div>
<div style="left:1025px;top:285.65px;width:27.4px;height:20.6px;background:#ffff00;"></div>
<svg style="left:997px;top:285px;" width="21" height="19" viewBox="0 0 21 19"><g transform="translate(0,0.65)"><path d="M0.3 11.2 L5 8.8 L8 12.2 C11 7 15 3 19.2 1 L20.3 6.6 C16 9 12 13 8.7 17.5 Z" fill="#1c54b0"/></g></svg>
<span class="t" style="left:1059.2px;top:287.85px;font-size:12px;line-height:17px;color:#222;letter-spacing:-0.323px;-webkit-text-stroke:0.2px #222;">Bottom</span>
<span class="t" style="left:1160.6px;top:287.85px;font-size:12px;line-height:17px;color:#222;letter-spacing:-0.033px;">(2)</span>
<div style="left:991px;top:330.91px;width:190px;height:1px;background:#f0f0f0;"></div>
<div style="left:1025px;top:309.78px;width:27.4px;height:20.6px;background:#00ff00;"></div>
<svg style="left:997px;top:309px;" width="21" height="19" viewBox="0 0 21 19"><g transform="translate(0,0.78)"><path d="M0.3 11.2 L5 8.8 L8 12.2 C11 7 15 3 19.2 1 L20.3 6.6 C16 9 12 13 8.7 17.5 Z" fill="#1c54b0"/></g></svg>
<span class="t" style="left:1059.2px;top:311.98px;font-size:12px;line-height:17px;color:#222;letter-spacing:-0.276px;-webkit-text-stroke:0.2px #222;">Bottom Paste</span>
<div style="left:991px;top:355.04px;width:190px;height:1px;background:#f0f0f0;"></div>
<div style="left:1025px;top:333.91px;width:27.4px;height:20.6px;background:#ff0000;"></div>
<svg style="left:997px;top:333px;" width="21" height="19" viewBox="0 0 21 19"><g transform="translate(0,0.91)"><path d="M0.3 11.2 L5 8.8 L8 12.2 C11 7 15 3 19.2 1 L20.3 6.6 C16 9 12 13 8.7 17.5 Z" fill="#1c54b0"/></g></svg>
<span class="t" style="left:1059.2px;top:336.11px;font-size:12px;line-height:17px;color:#222;letter-spacing:-0.332px;-webkit-text-stroke:0.2px #222;">Bottom Mask</span>
<div style="left:991px;top:379.17px;width:190px;height:1px;background:#f0f0f0;"></div>
<div style="left:1025px;top:358.04px;width:27.4px;height:20.6px;background:#3434ff;"></div>
<svg style="left:997px;top:358px;" width="21" height="19" viewBox="0 0 21 19"><g transform="translate(0,0.04)"><path d="M0.3 11.2 L5 8.8 L8 12.2 C11 7 15 3 19.2 1 L20.3 6.6 C16 9 12 13 8.7 17.5 Z" fill="#1c54b0"/></g></svg>
<span class="t" style="left:1059.2px;top:360.24px;font-size:12px;line-height:17px;color:#222;letter-spacing:-0.399px;-webkit-text-stroke:0.2px #222;">Bottom Silk</span>
<div style="left:991px;top:403.3px;width:190px;height:1px;background:#f0f0f0;"></div>
<div style="left:1025px;top:382.17px;width:27.4px;height:20.6px;background:#8c8c8c;"></div>
<svg style="left:997px;top:382px;" width="21" height="19" viewBox="0 0 21 19"><g transform="translate(0,0.17)"><path d="M0.3 11.2 L5 8.8 L8 12.2 C11 7 15 3 19.2 1 L20.3 6.6 C16 9 12 13 8.7 17.5 Z" fill="#1c54b0"/></g></svg>
<span class="t" style="left:1059.2px;top:384.37px;font-size:12px;line-height:17px;color:#222;letter-spacing:0.071px;-webkit-text-stroke:0.2px #222;">Bottom Assy</span>
<div style="left:991px;top:427.43px;width:190px;height:1px;background:#f0f0f0;"></div>
<div style="left:1025px;top:406.3px;width:27.4px;height:20.6px;background:#8400c4;"></div>
<svg style="left:997px;top:406px;" width="21" height="19" viewBox="0 0 21 19"><g transform="translate(0,0.3)"><path d="M0.3 11.2 L5 8.8 L8 12.2 C11 7 15 3 19.2 1 L20.3 6.6 C16 9 12 13 8.7 17.5 Z" fill="#1c54b0"/></g></svg>
<span class="t" style="left:1059.2px;top:408.5px;font-size:12px;line-height:17px;color:#222;letter-spacing:-0.231px;-webkit-text-stroke:0.2px #222;">Board Outline</span>
<div style="left:1022.5px;top:163px;width:1px;height:266px;background:#f4f4f4;"></div>
<div style="left:1054px;top:163px;width:1px;height:266px;background:#f4f4f4;"></div>
<div style="left:1180px;top:163px;width:1px;height:266px;background:#f0f0f0;"></div>
<div style="left:992px;top:164px;width:30.4px;height:22.6px;border:1.5px solid #a8d0f0;background:rgba(220,240,255,0.25);"></div>
<svg style="left:997px;top:165px;" width="21" height="18" viewBox="0 0 21 18"><path d="M0.3 11.2 L5 8.8 L8 12.2 C11 7 15 3 19.2 1 L20.3 6.6 C16 9 12 13 8.7 17.5 Z" fill="#1c54b0"/></svg>
<svg style="left:998px;top:452px;" width="18" height="17" viewBox="0 0 18 17"><g transform="translate(0.2,0.2)"><path d="M5.6 4.4 V15.6 M0.2 10 H11.4" stroke="#109414" stroke-width="1.9"/><path d="M7.6 7 L11.4 3.4" stroke="#e01430" stroke-width="2.2"/><rect x="10.2" y="0" width="5.8" height="5.4" fill="#1c1cdc"/></g></svg>
<svg style="left:1035px;top:452px;" width="17" height="17" viewBox="0 0 17 17"><g transform="translate(0,0.2)"><g transform="translate(0,3.8)"><rect x="0.5" y="0.5" width="12.6" height="11" fill="#fff" stroke="#262626" stroke-width="1.1"/><rect x="0" y="0" width="13.6" height="2.5" fill="#262626"/><path d="M2.4 5.5 H4.4 M5.6 5.5 H11.4" stroke="#2e2e2e" stroke-width="1"/><path d="M2.4 7.5 H4.4 M5.6 7.5 H11.4" stroke="#2e2e2e" stroke-width="1"/><path d="M2.4 9.5 H4.4 M5.6 9.5 H11.4" stroke="#2e2e2e" stroke-width="1"/></g><path d="M8.6 7.4 L12.6 3.6" stroke="#e01430" stroke-width="2.2"/><rect x="11.2" y="0" width="5.6" height="5.2" fill="#1c1cdc"/></g></svg>
<div style="left:1085px;top:448px;width:89.4px;height:24px;background:#fff;border:1px solid #7a7a7a;"></div>
<span class="t" style="left:1089.4px;top:450.4px;font-size:12.2px;line-height:18px;color:#222;letter-spacing:-0.273px;">Contrast</span>
<svg style="left:1158px;top:458px;" width="10" height="6" viewBox="0 0 10 6"><path d="M0.5 0.5 L5.0 5 L9.5 0.5" fill="none" stroke="#505050" stroke-width="1.2"/></svg>
<svg style="left:1183px;top:453px;" width="12" height="13" viewBox="0 0 12 13"><g transform="translate(0,0.2)"><rect x="0" y="3.6" width="8.4" height="8.4" fill="#a4a4a4"/><rect x="3.6" y="0" width="8.4" height="8.4" fill="#050505"/><rect x="3.6" y="3.6" width="4.8" height="4.8" fill="#5a5a5a"/></g></svg>
<div style="left:980px;top:480px;width:220px;height:1px;background:#fff;"></div>
<span class="t" style="left:989.4px;top:494.6px;font-size:13.6px;line-height:18px;color:#333;letter-spacing:-0.015px;">Design Manager</span>
<svg style="left:1111px;top:497px;" width="13" height="16" viewBox="0 0 13 16"><g transform="translate(0.2,0.6)"><rect x="5" y="0.6" width="6.6" height="14" fill="#f0a8b0"/><path d="M5 1.2 H11.6 M5 3.6 H11.6 M5 6 H11.6 M5 8.4 H11.6 M5 10.8 H11.6 M5 13.2 H11.6" stroke="#3a3a3a" stroke-width="1"/><path d="M4 5 H1.4 V11.4 H4 M2.8 3.4 L4.4 5 L2.8 6.6 M2.8 9.8 L1.2 11.4 L2.8 13" fill="none" stroke="#111" stroke-width="1.1"/></g></svg>
<div style="left:1134.8px;top:488.2px;width:33.4px;height:31.8px;background:#c4dff6;border:1px solid #b4d4f0;"></div>
<svg style="left:1145px;top:498px;" width="14" height="15" viewBox="0 0 14 15"><path d="M0 3 H3 M0 6 H3 M0 9 H3 M0 12 H3 M11 3 H14 M11 6 H14 M11 9 H14 M11 12 H14" stroke="#003000" stroke-width="1.7"/><path d="M2.6 1 H5.2 Q7 2.8 8.8 1 H11.4 V14 H2.6 Z" fill="#08f4f0" stroke="#08a838" stroke-width="1.5" stroke-linejoin="round"/></svg>
<svg style="left:1175px;top:498px;" width="17" height="14" viewBox="0 0 17 14"><path d="M3.4 3.6 L6.4 7 H10.4 L13.6 10.4" fill="none" stroke="#2838d0" stroke-width="1.5"/><circle cx="2.6" cy="2.6" r="1.9" fill="#fbfbfb" stroke="#2838d0" stroke-width="1.1"/><circle cx="14.4" cy="11.2" r="1.9" fill="#fbfbfb" stroke="#2838d0" stroke-width="1.1"/></svg>
<div style="left:989px;top:525px;width:212px;height:110px;background:#fff;border:1px solid #868686;"></div>
<div style="left:252.4px;top:50px;width:214.4px;height:448.8px;background:#f2f2f2;border:1px solid #c8c8c8;box-shadow:2px 2px 3px rgba(0,0,0,0.5);"></div>
<div style="left:255px;top:307.6px;width:209.2px;height:24px;background:#91c9f7;"></div>
<span class="t" style="left:289.7px;top:56.9px;font-size:13px;line-height:18px;color:#1a1a1a;letter-spacing:0.15px;-webkit-text-stroke:0.15px #1a1a1a;">Run Autorouter</span>
<span class="t" style="left:289.7px;top:80.9px;font-size:13px;line-height:18px;color:#1a1a1a;letter-spacing:0.18px;-webkit-text-stroke:0.15px #1a1a1a;">Current Autorouter</span>
<svg style="left:451px;top:83px;" width="5" height="10" viewBox="0 0 5 10"><g transform="translate(0,0.8)"><path d="M0.4 0.4 L4.6 4 L0.4 7.6 Z" fill="#111"/></g></svg>
<span class="t" style="left:289.7px;top:104.9px;font-size:13px;line-height:18px;color:#1a1a1a;letter-spacing:0.015px;-webkit-text-stroke:0.15px #1a1a1a;">Autorouter Setup...</span>
<span class="t" style="left:289.7px;top:128.9px;font-size:13px;line-height:18px;color:#1a1a1a;letter-spacing:-0.127px;-webkit-text-stroke:0.15px #1a1a1a;">Electra/Specctra Interface</span>
<svg style="left:451px;top:131px;" width="5" height="10" viewBox="0 0 5 10"><g transform="translate(0,0.8)"><path d="M0.4 0.4 L4.6 4 L0.4 7.6 Z" fill="#111"/></g></svg>
<span class="t" style="left:289.7px;top:159.9px;font-size:13px;line-height:18px;color:#1a1a1a;letter-spacing:0.096px;-webkit-text-stroke:0.15px #1a1a1a;">Manual Routing</span>
<svg style="left:451px;top:162px;" width="5" height="10" viewBox="0 0 5 10"><g transform="translate(0,0.8)"><path d="M0.4 0.4 L4.6 4 L0.4 7.6 Z" fill="#111"/></g></svg>
<span class="t" style="left:289.7px;top:183.9px;font-size:13px;line-height:18px;color:#1a1a1a;letter-spacing:-0.357px;-webkit-text-stroke:0.15px #1a1a1a;">Layer Setup...</span>
<span class="t" style="left:289.7px;top:207.9px;font-size:13px;line-height:18px;color:#1a1a1a;letter-spacing:-0.262px;-webkit-text-stroke:0.15px #1a1a1a;">Route Setup...</span>
<span class="t" style="left:289.7px;top:231.9px;font-size:13px;line-height:18px;color:#1a1a1a;letter-spacing:-0.425px;-webkit-text-stroke:0.15px #1a1a1a;">Via Styles...</span>
<span class="t" style="left:289.7px;top:255.9px;font-size:13px;line-height:18px;color:#1a1a1a;letter-spacing:-0.455px;-webkit-text-stroke:0.15px #1a1a1a;">Net Classes...</span>
<span class="t" style="left:289.7px;top:280.9px;font-size:13px;line-height:18px;color:#1a1a1a;letter-spacing:-0.045px;-webkit-text-stroke:0.15px #1a1a1a;">Hierarchy...</span>
<span class="t" style="left:289.7px;top:310.9px;font-size:13px;line-height:18px;color:#1a1a1a;letter-spacing:-0.359px;-webkit-text-stroke:0.15px #1a1a1a;">Load Rules...</span>
<span class="t" style="left:289.7px;top:334.9px;font-size:13px;line-height:18px;color:#1a1a1a;letter-spacing:-0.61px;-webkit-text-stroke:0.15px #1a1a1a;">Save Rules...</span>
<span class="t" style="left:289.7px;top:365.9px;font-size:13px;line-height:18px;color:#6d6d6d;letter-spacing:-0.163px;-webkit-text-stroke:0.15px #6d6d6d;">Unroute Selected</span>
<span class="t" style="left:289.7px;top:389.9px;font-size:13px;line-height:18px;color:#6d6d6d;letter-spacing:0.141px;-webkit-text-stroke:0.15px #6d6d6d;">Unroute All</span>
<span class="t" style="left:289.7px;top:420.9px;font-size:13px;line-height:18px;color:#1a1a1a;letter-spacing:0.055px;-webkit-text-stroke:0.15px #1a1a1a;">Connection Manager...</span>
<span class="t" style="left:289.7px;top:444.9px;font-size:13px;line-height:18px;color:#1a1a1a;letter-spacing:-0.23px;-webkit-text-stroke:0.15px #1a1a1a;">Trace Templates...</span>
<span class="t" style="left:289.7px;top:474.9px;font-size:13px;line-height:18px;color:#1a1a1a;letter-spacing:-0.039px;-webkit-text-stroke:0.15px #1a1a1a;">Lock Net Structure</span>
<span class="t" style="left:398.4px;top:56.9px;font-size:13px;line-height:18px;color:#1a1a1a;letter-spacing:-0.097px;-webkit-text-stroke:0.15px #1a1a1a;">Ctrl+F9</span>
<div style="left:288px;top:152px;width:176px;height:1px;background:#d4d4d4;"></div>
<div style="left:288px;top:303.2px;width:176px;height:1px;background:#d4d4d4;"></div>
<div style="left:288px;top:358px;width:176px;height:1px;background:#d4d4d4;"></div>
<div style="left:288px;top:413px;width:176px;height:1px;background:#d4d4d4;"></div>
<div style="left:288px;top:468px;width:176px;height:1px;background:#d4d4d4;"></div>
<svg style="left:262px;top:57px;" width="10" height="16" viewBox="0 0 10 16"><g transform="translate(0.6,0.6)"><defs><linearGradient id="pg2" x1="0" y1="0" x2="0.35" y2="1"><stop offset="0" stop-color="#3cf060"/><stop offset="0.62" stop-color="#18e040"/><stop offset="0.8" stop-color="#149c28"/><stop offset="1" stop-color="#0c5c14"/></linearGradient></defs><path d="M0.2 0.2 L9.4 7.1 L0.6 15.4 Z" fill="url(#pg2)"/></g></svg>
<svg style="left:258px;top:104px;" width="16" height="18" viewBox="0 0 16 18"><g transform="translate(0,0.4)"><g transform="translate(0,4.6)"><rect x="0.5" y="0.5" width="12" height="11" fill="#fff" stroke="#262626" stroke-width="1.1"/><rect x="0" y="0" width="13" height="2.5" fill="#262626"/><path d="M2.4 5.5 H4.4 M5.6 5.5 H10.8" stroke="#2e2e2e" stroke-width="1"/><path d="M2.4 7.5 H4.4 M5.6 7.5 H10.8" stroke="#2e2e2e" stroke-width="1"/><path d="M2.4 9.5 H4.4 M5.6 9.5 H10.8" stroke="#2e2e2e" stroke-width="1"/></g><path d="M9.4 0 L15.8 5 L9.4 10 Z" fill="#1ce43c"/><path d="M8 5 H10" stroke="#1ce43c" stroke-width="2"/></g></svg>
<svg style="left:258px;top:184px;" width="17" height="17" viewBox="0 0 17 17"><g transform="translate(0,0.2)"><g transform="translate(0,3.8)"><rect x="0.5" y="0.5" width="12.6" height="11" fill="#fff" stroke="#262626" stroke-width="1.1"/><rect x="0" y="0" width="13.6" height="2.5" fill="#262626"/><path d="M2.4 5.5 H4.4 M5.6 5.5 H11.4" stroke="#2e2e2e" stroke-width="1"/><path d="M2.4 7.5 H4.4 M5.6 7.5 H11.4" stroke="#2e2e2e" stroke-width="1"/><path d="M2.4 9.5 H4.4 M5.6 9.5 H11.4" stroke="#2e2e2e" stroke-width="1"/></g><path d="M8.6 7.4 L12.6 3.6" stroke="#e01430" stroke-width="2.2"/><rect x="11.2" y="0" width="5.6" height="5.2" fill="#1c1cdc"/></g></svg>
<svg style="left:258px;top:208px;" width="19" height="18" viewBox="0 0 19 18"><g transform="translate(0,0.4)"><g transform="translate(0,4.6)"><rect x="0.5" y="0.5" width="12.6" height="11" fill="#fff" stroke="#262626" stroke-width="1.1"/><rect x="0" y="0" width="13.6" height="2.5" fill="#262626"/><path d="M2.4 5.5 H4.4 M5.6 5.5 H11.4" stroke="#2e2e2e" stroke-width="1"/><path d="M2.4 7.5 H4.4 M5.6 7.5 H11.4" stroke="#2e2e2e" stroke-width="1"/><path d="M2.4 9.5 H4.4 M5.6 9.5 H11.4" stroke="#2e2e2e" stroke-width="1"/></g><path d="M5.4 2.6 L9 5.4 H12 L15 9.6" fill="none" stroke="#2424dc" stroke-width="1.3"/><circle cx="4.6" cy="2" r="1.8" fill="#fbfbfb" stroke="#2424dc" stroke-width="1.1"/><circle cx="16" cy="10.4" r="1.8" fill="#fbfbfb" stroke="#2424dc" stroke-width="1.1"/></g></svg>
</div>
</body></html>
